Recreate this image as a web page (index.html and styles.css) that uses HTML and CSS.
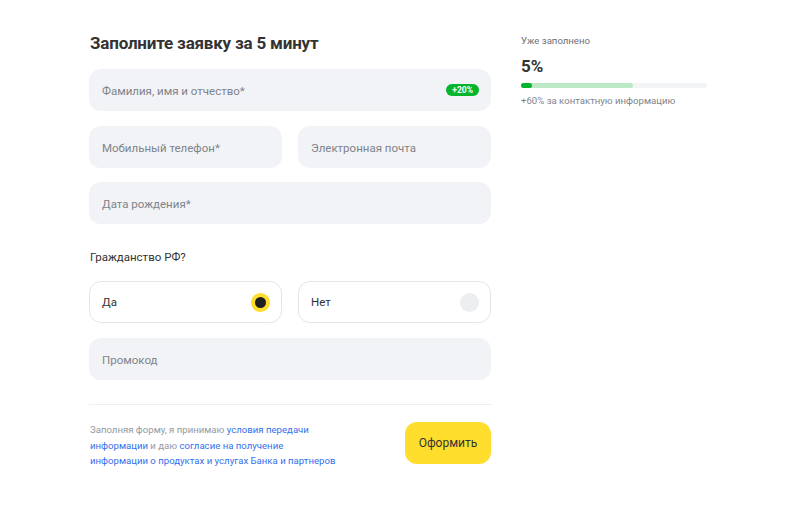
FILE: index.html
```html
<!DOCTYPE html>
<html lang="ru">
<head>
<meta charset="utf-8">
<link rel="stylesheet" href="styles.css">
</head>
<body>
<div class="page">
  <form class="form">
    <h1 class="title">Заполните заявку за 5 минут</h1>
    <div class="field field-full">
      <span class="ph">Фамилия, имя и отчество*</span>
      <span class="badge">+20%</span>
    </div>
    <div class="row">
      <div class="field"><span class="ph">Мобильный телефон*</span></div>
      <div class="field"><span class="ph">Электронная почта</span></div>
    </div>
    <div class="field field-full"><span class="ph">Дата рождения*</span></div>
    <div class="question">Гражданство РФ?</div>
    <div class="row row-radio">
      <div class="radio-card"><span class="opt">Да</span><span class="radio radio-on"></span></div>
      <div class="radio-card"><span class="opt">Нет</span><span class="radio"></span></div>
    </div>
    <div class="field field-full"><span class="ph">Промокод</span></div>
    <div class="divider"></div>
    <div class="footer">
      <p class="legal">Заполняя форму, я принимаю <a class="link">условия передачи</a><br><a class="link">информации</a> и даю <a class="link">согласие на получение</a><br><a class="link">информации о продуктах и услугах Банка и партнеров</a></p>
      <div class="btn">Оформить</div>
    </div>
  </form>
  <aside class="progress">
    <div class="p-label">Уже заполнено</div>
    <div class="p-value">5%</div>
    <div class="bar"><div class="bar-next" style="width:60%"></div><div class="bar-fill" style="width:6%"></div></div>
    <div class="p-hint">+60% за контактную информацию</div>
  </aside>
</div>
</body>
</html>
```

FILE: styles.css
```css
* { box-sizing: border-box; }
html, body { margin: 0; padding: 0; background: #fff; }
body { font-family: Roboto, "Noto Sans", sans-serif; color: #333; }
.page {
  display: flex;
  padding: 33px 0 0 89px;
  gap: 30px;
}
.form {
  width: 402px;
  display: flex;
  flex-direction: column;
}
.title {
  margin: 0 0 16px 1px;
  font-size: 17px;
  font-weight: 700;
  line-height: 20px;
  color: #333;
  letter-spacing: -0.2px;
}
.field {
  height: 42px;
  border-radius: 12px;
  background: #f2f3f6;
  display: flex;
  align-items: center;
  justify-content: space-between;
  padding: 0 12px 0 13px;
  flex: 1;
}
.field-full { flex: none; margin-bottom: 15px; }
.ph { font-size: 11.5px; color: #7f838a; padding-top: 1px; }
.badge {
  background: #04b52c;
  color: #fff;
  font-size: 8.5px;
  font-weight: 700;
  height: 12px;
  line-height: 12px;
  padding: 0 6px;
  border-radius: 6px;
}
.row {
  display: flex;
  gap: 16px;
  margin-bottom: 14px;
}
.row-radio { margin-bottom: 15px; }
.question {
  font-size: 11.5px;
  color: #333;
  margin: 11px 0 17px 1px;
  line-height: 14px;
}
.radio-card {
  flex: 1;
  height: 42px;
  border: 1px solid #e3e5e8;
  border-radius: 12px;
  display: flex;
  align-items: center;
  justify-content: space-between;
  padding: 0 11px 0 12px;
}
.opt { font-size: 11.5px; color: #333; }
.radio {
  width: 19px;
  height: 19px;
  border-radius: 50%;
  background: #eceef2;
}
.radio-on {
  background: #1f1f1f;
  border: 4.5px solid #ffdd2d;
}
.divider {
  height: 1px;
  background: #eeeff1;
  margin: 9px 0 17px;
}
.footer {
  display: flex;
  justify-content: space-between;
  align-items: flex-start;
}
.legal {
  margin: 0 0 0 1px;
  font-size: 9.6px;
  line-height: 15.5px;
  color: #9299a2;
}
.link { color: #336fee; }
.btn {
  width: 86px;
  height: 42px;
  border-radius: 12px;
  background: #ffdd2d;
  display: flex;
  align-items: center;
  justify-content: center;
  font-size: 12px;
  color: #333;
}
.progress { width: 186px; padding-top: 2px; }
.p-label { font-size: 9.6px; color: #6b7078; line-height: 12px; }
.p-value { font-size: 17px; font-weight: 700; margin-top: 9px; line-height: 20px; color: #333; }
.bar {
  position: relative;
  height: 5px;
  border-radius: 3px;
  background: #f3f4f6;
  margin-top: 7px;
}
.bar-next, .bar-fill {
  position: absolute;
  left: 0; top: 0; bottom: 0;
  border-radius: 3px;
}
.bar-next { background: #bde8c6; }
.bar-fill { background: #04b52c; }
.p-hint { font-size: 9.6px; color: #7f838a; margin-top: 7px; }
```
